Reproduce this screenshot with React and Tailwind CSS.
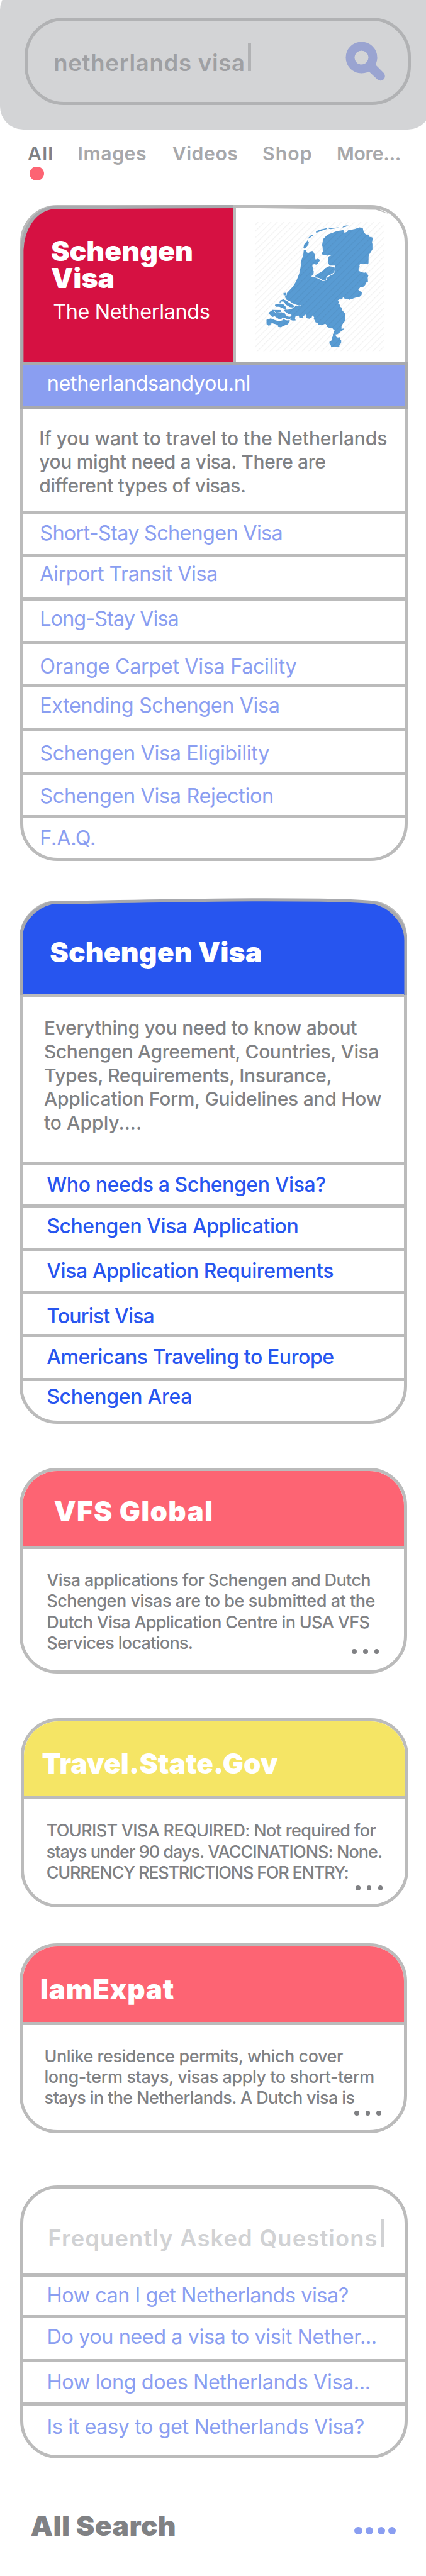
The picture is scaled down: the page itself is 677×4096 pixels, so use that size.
import React from "react";

const TABS = [
  { label: "All", cls: "w-[79.7px] tracking-[1.28px] text-[#808184]" },
  { label: "Images", cls: "w-[150.1px] tracking-[0.57px] text-[#a7a8ab]" },
  { label: "Videos", cls: "w-[143.3px] tracking-[0.54px] text-[#a7a8ab]" },
  { label: "Shop", cls: "w-[118px] tracking-[1.13px] text-[#a7a8ab]" },
  { label: "More...", cls: "w-[110px] tracking-[-0.29px] text-[#a7a8ab]" },
];

const NETHERLANDS_LINKS = [
  { label: "Short-Stay Schengen Visa", cls: "h-[69.2px] pt-[10.4px] tracking-[-0.7px]" },
  { label: "Airport Transit Visa", cls: "h-[69.1px] pt-[6.3px] tracking-[-0.56px]" },
  { label: "Long-Stay Visa", cls: "h-[69.2px] pt-[8.2px] tracking-[-0.94px]" },
  { label: "Orange Carpet Visa Facility", cls: "h-[69.1px] pt-[14.3px] tracking-[-0.36px]" },
  { label: "Extending Schengen Visa", cls: "h-[69.3px] pt-[7.3px] tracking-[-0.42px]" },
  { label: "Schengen Visa Eligibility", cls: "h-[69.2px] pt-[14.3px] tracking-[-0.36px]" },
  { label: "Schengen Visa Rejection", cls: "h-[69.2px] pt-[12.9px] tracking-[-0.35px]" },
  { label: "F.A.Q.", cls: "pt-[11.4px] tracking-[-0.26px]" },
];

const SCHENGEN_LINKS = [
  { label: "Who needs a Schengen Visa?", cls: "h-[66.7px] pt-[9.5px] tracking-[-0.41px]" },
  { label: "Schengen Visa Application", cls: "h-[69.1px] pt-[9px] tracking-[-0.41px]" },
  { label: "Visa Application Requirements", cls: "h-[69.2px] pt-[11.3px] tracking-[-0.39px]" },
  { label: "Tourist Visa", cls: "h-[68px] pt-[13.8px] tracking-[-0.82px]" },
  { label: "Americans Traveling to Europe", cls: "h-[69.5px] pt-[10.8px] tracking-[-0.42px]" },
  { label: "Schengen Area", cls: "pt-[4.3px] tracking-[-0.28px]" },
];

const FAQ_LINKS = [
  { label: "How can I get Netherlands visa?", cls: "h-[66.7px] pt-[9.6px] tracking-[-0.47px]" },
  { label: "Do you need a visa to visit Nether...", cls: "h-[69.4px] pt-[8.8px] tracking-[-0.44px]" },
  { label: "How long does Netherlands Visa...", cls: "h-[69.5px] pt-[11px] tracking-[-0.41px]" },
  { label: "Is it easy to get Netherlands Visa?", cls: "pt-[13.3px] tracking-[-0.43px]" },
];

const RESULTS = [
  {
    title: "VFS Global",
    card: "mt-[69.7px] ml-[30.7px] h-[327.7px]",
    head: "bg-[#fd6473] h-[124.6px] pt-[39.6px] pl-[50.1px] tracking-[1.3px]",
    body: "pt-[32.7px] pl-[38.5px] leading-[33.3px]",
    dots: "left-[523.6px] top-[283.3px]",
    lines: [
      { text: "Visa applications for Schengen and Dutch", cls: "tracking-[-0.62px]" },
      { text: "Schengen visas are to be submitted at the", cls: "tracking-[-0.45px]" },
      { text: "Dutch Visa Application Centre in USA VFS", cls: "tracking-[-0.68px]" },
      { text: "Services locations.", cls: "tracking-[-0.69px]" },
    ],
  },
  {
    title: "Travel.State.Gov",
    card: "mt-[70.5px] ml-[33.2px] h-[301.1px]",
    head: "bg-[#f5e565] h-[124.4px] pt-[42.2px] pl-[28.3px] tracking-[0.1px]",
    body: "pt-[33px] pl-[35.5px] leading-[33.35px]",
    dots: "left-[527px] top-[261.2px]",
    lines: [
      { text: "TOURIST VISA REQUIRED: Not required for", cls: "tracking-[-0.68px]" },
      { text: "stays under 90 days. VACCINATIONS: None.", cls: "tracking-[-0.98px]" },
      { text: "CURRENCY RESTRICTIONS FOR ENTRY:", cls: "tracking-[-1.23px]" },
    ],
  },
  {
    title: "IamExpat",
    card: "mt-[57.3px] ml-[30.7px] h-[301.5px]",
    head: "bg-[#fd6473] h-[124.4px] pt-[42.6px] pl-[28.4px] tracking-[0.75px]",
    body: "pt-[32.9px] pl-[34.8px] leading-[33.4px]",
    dots: "left-[527.4px] top-[261.2px]",
    lines: [
      { text: "Unlike residence permits, which cover", cls: "tracking-[-0.47px]" },
      { text: "long-term stays, visas apply to short-term", cls: "tracking-[-0.44px]" },
      { text: "stays in the Netherlands. A Dutch visa is", cls: "tracking-[-0.63px]" },
    ],
  },
];

function LinkList({ items, className }) {
  return (
    <ul className={className}>
      {items.map((item, i) => (
        <li
          key={item.label}
          className={`leading-[41.8px] border-[#bbbbbb] ${i < items.length - 1 ? "border-b-[5px]" : ""} ${item.cls}`}
        >
          {item.label}
        </li>
      ))}
    </ul>
  );
}

function Lines({ lines }) {
  return lines.map((line) => (
    <span key={line.text} className={`block ${line.cls}`}>
      {line.text}
    </span>
  ));
}

function SearchIcon() {
  return (
    <svg viewBox="548 66 64 63" className="mt-[33.7px] ml-[148.6px] h-[63px] w-[64px] shrink-0">
      <circle cx="574.5" cy="91.5" r="17.9" fill="none" stroke="#9aa4d1" strokeWidth="14.2" />
      <path d="M599.3 93 C598.6 97 596.5 100 597.4 103.6 L609.8 116 A7.2 7.2 0 0 1 599.4 126 L586.6 114 C583 112 580 115 577 116 L574 104 L587 92 Z" fill="#9aa4d1" />
      <circle cx="574.5" cy="91.5" r="10.8" fill="#d3d4d6" />
    </svg>
  );
}

function NetherlandsMap() {
  return (
    <svg viewBox="0 0 1050 1050" className="mt-[17.4px] ml-[28.7px] h-[210.5px] w-[210.5px] shrink-0">
      <defs>
        <pattern id="hatch" width="36" height="36" patternUnits="userSpaceOnUse" patternTransform="rotate(45)">
          <rect width="6" height="36" fill="#000" fillOpacity="0.05" />
        </pattern>
      </defs>
      <g fill="#589bd3">
        <path d="M398 240 L413 241 L418 258 L432 265 L446 260 L454 251 L470 251 L484 276 L485 300 L492 318 L506 312 L520 315 L524 328 L515 338 L512 350 L496 358 L482 354 L466 358 L467 375 L475 385 L471 402 L477 412 L475 435 L463 446 L452 448 L468 456 L496 461 L514 471 L530 477 L550 490 L576 482 L584 462 L606 447 L634 433 L648 408 L649 392 L643 376 L644 366 L604 365 L590 345 L589 310 L598 292 L616 284 L602 279 L586 287 L558 280 L548 280 L538 266 L549 258 L547 215 L543 205 L546 185 L552 155 L585 121 L620 107 L656 93 L712 84 L716 103 L726 104 L740 99 L748 86 L800 76 L840 62 L866 68 L873 100 L890 119 L916 120 L918 137 L941 142 L944 158 L938 180 L942 195 L942 237 L918 275 L912 292 L911 345 L906 356 L890 352 L846 352 L838 362 L842 378 L832 388 L832 407 L856 418 L878 423 L892 418 L900 433 L911 442 L905 462 L907 495 L894 500 L884 520 L868 535 L845 538 L830 557 L846 570 L858 580 L856 598 L842 612 L810 618 L785 629 L766 630 L762 638 L754 629 L726 632 L709 614 L704 628 L684 632 L667 642 L675 654 L671 669 L685 677 L686 692 L700 699 L701 718 L724 745 L727 803 L710 822 L697 844 L697 868 L714 864 L711 876 L692 888 L673 904 L664 910 L649 912 L655 930 L668 936 L683 934 L684 952 L695 960 L694 980 L680 996 L680 1012 L612 1012 L614 1002 L600 982 L602 969 L620 958 L619 938 L628 928 L629 907 L638 904 L638 886 L644 876 L632 872 L625 863 L608 863 L580 851 L578 834 L568 827 L548 834 L511 835 L508 820 L491 815 L486 798 L476 792 L480 775 L466 761 L460 778 L442 787 L414 782 L420 768 L410 753 L395 768 L388 780 L362 778 L358 762 L332 770 L328 784 L334 800 L310 802 L290 796 L294 784 L266 784 L250 770 L254 764 L284 772 L300 768 L300 756 L270 746 L238 722 L250 714 L276 716 L278 708 L290 712 L318 702 L332 686 L364 688 L378 680 L360 682 L330 674 L308 664 L290 650 L258 635 L248 612 L262 600 L264 584 L310 534 L338 490 L362 428 L372 380 L380 320 L394 282 Z" />
        <path d="M428 164 L438 180 L435 198 L415 222 L402 232 L396 222 L400 199 Z" />
        <path d="M427 152 L452 127 L480 120 L458 136 L442 150 Z" />
        <path d="M494 104 L496 92 L530 80 L584 67 L582 75 L542 88 L504 104 Z" />
        <path d="M594 63 L612 70 L672 62 L671 66 L612 76 L597 74 Z" />
        <path d="M704 64 L712 53 L734 47 L753 49 L728 59 Z" />
        <path d="M237 583 L254 581 L260 590 L256 602 L238 600 Z" />
        <path d="M210 642 L236 633 L262 645 L284 662 L326 686 L314 698 L288 694 L256 676 L240 652 L222 650 L204 664 Z" />
        <path d="M169 680 L176 670 L212 667 L236 673 L262 700 L256 712 L234 706 L204 692 L176 692 Z" />
        <path d="M116 742 L150 717 L214 718 L218 734 L248 744 L256 762 L278 774 L292 780 L290 792 L262 788 L238 778 L224 780 L222 790 L198 788 L168 768 L148 773 Z" />
        <path d="M102 795 L136 785 L170 798 L206 808 L232 798 L236 787 L252 798 L270 800 L284 798 L290 804 L272 830 L236 844 L216 856 L194 852 L192 836 L150 823 L134 826 L134 838 L118 842 L103 830 Z" />
        <path d="M490 442 L552 405 L564 388 L600 370 L640 377 L645 394 L640 418 L613 437 L579 452 L574 478 L552 486 L528 468 L490 457 Z" />
      </g>
      <path d="M162 726 L178 742 L216 736" fill="none" stroke="#fff" strokeWidth="4" />
      <rect x="10" y="20" width="1026" height="1024" fill="url(#hatch)" />
    </svg>
  );
}

function Dots({ className }) {
  return (
    <div className={`absolute flex gap-[10.1px] ${className}`}>
      {[0, 1, 2].map((i) => (
        <span key={i} className="h-[7.6px] w-[7.6px] rounded-full bg-[#808184]" />
      ))}
    </div>
  );
}

function ResultCard({ item }) {
  return (
    <section className={`relative w-[616.3px] shrink-0 rounded-[60px] border-[5px] border-[#bbbbbb] ${item.card}`}>
      <h2 className={`rounded-t-[55px] border-b-[5px] border-[#bbbbbb] text-[44px] leading-[50px] font-black text-white ${item.head}`}>
        {item.title}
      </h2>
      <p className={`text-[27px] font-medium whitespace-nowrap text-[#808184] ${item.body}`}>
        <Lines lines={item.lines} />
      </p>
      <Dots className={item.dots} />
    </section>
  );
}

export default function App() {
  return (
    <main className="flex h-[4096px] w-[677px] flex-col items-start overflow-hidden bg-white font-['Inter','Liberation_Sans',sans-serif]">
      <header className="mt-[-21px] h-[227px] w-[685px] shrink-0 rounded-[37px] bg-[#d3d4d6] pt-[48.5px] pl-[39px]">
        <div className="flex h-[139.5px] w-[614px] items-start rounded-[62px] border-[5px] border-[#b1b2b4] pl-[41.2px]">
          <span className="mt-[42.2px] w-[309px] shrink-0 text-[36.5px] leading-[50px] font-semibold tracking-[0.74px] whitespace-nowrap text-[#9fa0a3]">
            netherlands visa
          </span>
          <span className="mt-[35.6px] h-[45.2px] w-[5px] shrink-0 bg-[#b1b2b4]" />
          <SearchIcon />
        </div>
      </header>

      <nav className="mt-[17.6px] ml-[43.9px] flex shrink-0 text-[30.2px] leading-[40px] font-semibold whitespace-nowrap">
        {TABS.map((tab) => (
          <span key={tab.label} className={`shrink-0 ${tab.cls}`}>
            {tab.label}
          </span>
        ))}
      </nav>
      <span className="mt-[1.3px] ml-[47px] h-[22.6px] w-[22.6px] shrink-0 rounded-full bg-[#fd6473]" />

      <section className="relative mt-[38.8px] ml-[31.5px] h-[1043.2px] w-[616.5px] shrink-0 rounded-[59px] border-[5px] border-[#bbbbbb]">
        <svg viewBox="31.5 326.5 616.5 255" className="absolute -top-[5px] -left-[5px] h-[255px] w-[616.5px]">
          <path d="M34.4 581 V398 C35.5 364 54 336 82 330.6 L369.6 328.9 V581 Z" fill="#d61142" />
          <path d="M34.4 581 V398 C35.5 364 54 336 82 330.6 L369.6 328.9" fill="none" stroke="#a8a9ad" strokeWidth="5" />
          <path d="M374 331 L597 334 L618 341 L596 330 Z" fill="#bbbbbb" />
        </svg>
        <div className="relative flex h-[244.7px]">
          <div className="w-[333.1px] shrink-0 pt-[46.4px] pl-[44.4px] whitespace-nowrap text-white">
            <h1 className="text-[44.5px] leading-[43.2px] font-black">
              Schengen
              <br />
              Visa
            </h1>
            <p className="mt-[12.1px] ml-[3.3px] text-[32.4px] leading-[40px] tracking-[-0.37px]">The Netherlands</p>
          </div>
          <div className="flex grow border-l-[5px] border-[#bbbbbb]">
            <NetherlandsMap />
          </div>
        </div>
        <div className="relative mx-[-5px] h-[74.4px] border-[5px] border-[#a8a9ad] bg-[#8a9ef1] pt-[9.3px] pl-[38.3px] text-[32.4px] leading-[40px] tracking-[-0.41px] text-white">
          netherlandsandyou.nl
        </div>
        <p className="h-[166.5px] border-b-[5px] border-[#bbbbbb] pt-[28.5px] pl-[25.8px] text-[30px] leading-[37.4px] font-medium whitespace-nowrap text-[#808184]">
          <span className="block tracking-[-0.08px]">If you want to travel to the Netherlands</span>
          <span className="block tracking-[-0.37px]">you might need a visa. There are</span>
          <span className="block tracking-[-0.41px]">different types of visas.</span>
        </p>
        <LinkList items={NETHERLANDS_LINKS} className="[&>li]:pl-[26.8px] text-[32.4px] text-[#8a9ef1]" />
      </section>

      <section className="relative mt-[62.1px] ml-[30.7px] h-[832.4px] w-[616.5px] shrink-0 rounded-[60px] border-[5px] border-[#bbbbbb]">
        <svg viewBox="30.7 1426.8 616.5 155" className="absolute -top-[10px] -left-[5px] h-[155px] w-[616.5px]">
          <path
            d="M33.2 1590 V1489 C33.2 1466 54 1442 82 1435.2 C200 1433.2 330 1430.5 400 1430.5 C480 1430.3 560 1431.5 590 1434.4 C620 1439 644.7 1466 644.7 1495 V1590"
            fill="#2755ef"
            stroke="#a8a9ad"
            strokeWidth="5"
          />
        </svg>
        <h2 className="relative h-[149.6px] border-b-[5px] border-[#bbbbbb] pt-[52.1px] pl-[43.5px] text-[44.5px] leading-[50px] font-black tracking-[0.08px] text-white">
          Schengen Visa
        </h2>
        <p className="h-[267px] border-b-[5px] border-[#bbbbbb] pt-[30.1px] pl-[34.2px] text-[30px] leading-[37.63px] font-medium whitespace-nowrap text-[#808184]">
          <span className="block tracking-[-0.28px]">Everything you need to know about</span>
          <span className="block tracking-[-0.41px]">Schengen Agreement, Countries, Visa</span>
          <span className="block tracking-[-0.4px]">Types, Requirements, Insurance,</span>
          <span className="block tracking-[-0.26px]">Application Form, Guidelines and How</span>
          <span className="block tracking-[0.06px]">to Apply....</span>
        </p>
        <LinkList items={SCHENGEN_LINKS} className="[&>li]:pl-[38.5px] text-[32px] font-medium text-[#2755ef]" />
      </section>

      {RESULTS.map((item) => (
        <ResultCard key={item.title} item={item} />
      ))}

      <section className="mt-[82.9px] ml-[32px] h-[434px] w-[616px] shrink-0 rounded-[60px] border-[5px] border-[#bbbbbb]">
        <div className="flex h-[139.9px] items-start border-b-[5px] border-[#bbbbbb] pl-[39.3px]">
          <h2 className="mt-[54.3px] w-[528.6px] shrink-0 text-[36.3px] leading-[50px] font-semibold tracking-[1.14px] whitespace-nowrap text-[#d1d2d4]">
            Frequently Asked Questions
          </h2>
          <span className="mt-[47.9px] h-[45.7px] w-[5px] shrink-0 bg-[#d1d2d4]" />
        </div>
        <LinkList items={FAQ_LINKS} className="[&>li]:pl-[37.6px] text-[32.4px] text-[#8a9ef1]" />
      </section>

      <footer className="mt-[82.1px] flex shrink-0 items-start">
        <h2 className="w-[563.4px] pl-[48.8px] text-[44.5px] leading-[50px] font-black tracking-[0.35px] text-[#808184]">All Search</h2>
        <div className="mt-[27px] flex">
          <span className="h-[12.4px] w-[12.4px] rounded-full bg-[#8a9ef1]" />
          <span className="ml-[4.9px] h-[12.4px] w-[12.4px] rounded-full bg-[#8a9ef1]" />
          <span className="ml-[6.8px] h-[12.4px] w-[12.4px] rounded-full bg-[#8a9ef1]" />
          <span className="ml-[4.6px] h-[12.4px] w-[12.4px] rounded-full bg-[#8a9ef1]" />
        </div>
      </footer>
    </main>
  );
}
